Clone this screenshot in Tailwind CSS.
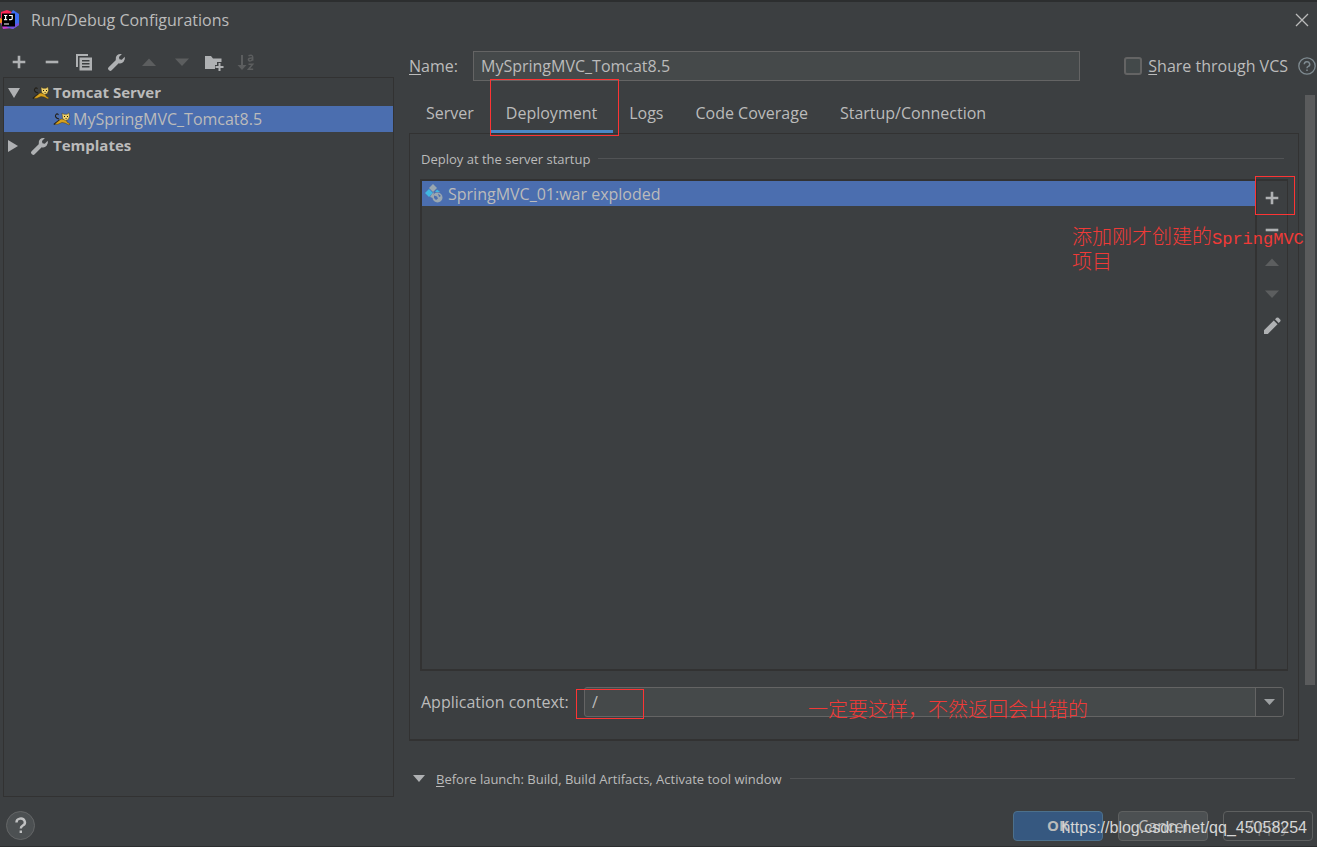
<!DOCTYPE html>
<html lang="en">
<head>
<meta charset="utf-8">
<title>Run/Debug Configurations</title>
<script src="https://cdn.jsdelivr.net/npm/@tailwindcss/browser@4"></script>
</head>
<body class="bg-[#3c3f41] text-[#bbbbbb] font-['Open_Sans','Noto_Sans_CJK_SC',sans-serif] text-base">
<svg class="hidden" aria-hidden="true">
  <symbol id="plus" viewBox="0 0 20 20"><path d="M8.700 3.700h2.600v5h5v2.600h-5v5H8.700v-5h-5V8.700h5z" fill="#afb1b3"/></symbol>
  <symbol id="minus" viewBox="0 0 20 20"><path d="M3.700 8.700h12.600v2.600H3.700z" fill="#afb1b3"/></symbol>
  <symbol id="up" viewBox="0 0 20 20"><path d="M3 14h14l-7-7.500z" fill="#5c5e5f"/></symbol>
  <symbol id="down" viewBox="0 0 20 20"><path d="M3 6.500h14l-7 7.500z" fill="#5c5e5f"/></symbol>
  <symbol id="wrench" viewBox="0 0 20 20"><path d="M17.700 4.800 14.800 7.700 12.400 7.300 12 5 14.900 2.100A5 5 0 0 0 8.700 8.200L1.600 15.200a1.900 1.900 0 0 0 0 2.700l.4.4a1.900 1.900 0 0 0 2.700 0L11.700 11.200A5 5 0 0 0 17.700 4.800z" fill="#afb1b3"/></symbol>
  <symbol id="cat" viewBox="0 0 18 14">
    <path d="M6 7C3 6 1.500 4.500 3 2.500 4 1.300 5.500 2 5 3M6.500 8 2 11.500.8 12.500" fill="none" stroke="#221e16" stroke-width="1.100"/>
    <path d="M3 11 8 7l5 .5 1 2.500 3 2-1 1-4-2-3-.6-4 1.800-3 .2z" fill="#d8a11c" stroke="#3a2b0a" stroke-width=".4"/>
    <path d="M9 1l2 1.300h3L16 .8l.6 3.700-1.400 3.200-3 .8-2.600-2z" fill="#efd16a" stroke="#2b210d" stroke-width=".4"/>
    <path d="M11 4h1v1h-1zM14 4h1v1h-1zM12.500 6.300h1.200v.7h-1.200z" fill="#201a10"/>
  </symbol>
</svg>

<div class="flex min-h-screen flex-col border-t-2 border-[#2c2e2f]">
  <header class="flex h-9 items-center justify-between pr-2">
    <div class="flex items-center gap-3">
      <svg class="h-5 w-[19px]" viewBox="0 0 19 20" aria-hidden="true">
        <path d="M0 8 6 10 5 15 0 13z" fill="#f98b1c"/>
        <path d="M1 2 7 0l5 2 1 5-6 5-6-4z" fill="#fe2857"/>
        <path d="M1 13l6-3 5 8-9 1z" fill="#c53bd1"/>
        <path d="M11 3 13 0l6 4v11l-6 4-6-2z" fill="#3d6df0"/>
        <path d="M12 15l7-2v2l-6 4-4-1z" fill="#7750d8"/>
        <path d="M2 3.500h13v13H2z" fill="#000"/>
        <path d="M4 5.500h3.200M5.600 5.500v4.200M4 9.700h3.200M9 5.500h3.200v3q0 1.200-1.200 1.200H9M4 14h5" fill="none" stroke="#fff" stroke-width="1.200"/>
      </svg>
      <h1>Run/Debug Configurations</h1>
    </div>
    <button type="button" aria-label="Close"><svg class="size-[14px]" viewBox="0 0 14 14"><path d="M1 1 13 13M13 1 1 13" stroke="#bbbbbb" stroke-width="1.300"/></svg></button>
  </header>

  <div class="flex flex-1">
    <aside class="flex w-[394px] shrink-0 flex-col pl-[3px]">
      <div class="ml-[6px] flex h-[39px] w-[248px] items-center justify-between pt-2" role="toolbar">
        <button type="button" aria-label="Add"><svg class="size-5"><use href="#plus"/></svg></button>
        <button type="button" aria-label="Remove"><svg class="size-5"><use href="#minus"/></svg></button>
        <button type="button" aria-label="Copy"><svg class="size-5" viewBox="0 0 20 20"><path d="M2 2h12v2H4v11H2z" fill="#afb1b3"/><path d="M5.500 5.500h12.500V18.500H5.500zM8 8v1.400h7.500V8zM8 11v1.400h7.500V11zM8 14v1.400h7.500V14z" fill="#afb1b3" fill-rule="evenodd"/></svg></button>
        <button type="button" aria-label="Edit templates"><svg class="size-5"><use href="#wrench"/></svg></button>
        <button type="button" aria-label="Move up" disabled><svg class="size-5"><use href="#up"/></svg></button>
        <button type="button" aria-label="Move down" disabled><svg class="size-5"><use href="#down"/></svg></button>
        <button type="button" aria-label="New folder"><svg class="size-5" viewBox="0 0 20 20"><path d="M1 4h6l2 2.500h8.500V10H13v3h-2v4H1z" fill="#afb1b3"/><path d="M14.500 11h2v3h3v2h-3v3h-2v-3h-3v-2h3z" fill="#afb1b3"/></svg></button>
        <button type="button" aria-label="Sort" disabled><svg class="size-5" viewBox="0 0 20 20"><path d="M4 3h2v10h3.500L5 18 .5 13H4z" fill="#5c5e5f"/><path d="M11.500 3.800q4.200-1.500 4.200 1.400v3.600M15.700 6c-6-.4-5 4-1.500 2.600l1.500-1.200M11.500 12.200h4.200l-4.200 5h4.700" fill="none" stroke="#5c5e5f" stroke-width="1.500"/></svg></button>
      </div>
      <ul class="flex-1 border border-[#323232] pt-px" role="tree">
        <li class="flex h-[27px] items-center pl-1 text-[15px] font-bold">
          <svg class="mr-3 h-[10px] w-3" viewBox="0 0 12 10"><path d="M0 0h12L6 10z" fill="#afb1b3"/></svg>
          <svg class="mr-[3px] h-[14px] w-[18px]"><use href="#cat"/></svg>Tomcat Server
        </li>
        <li class="flex h-[26px] items-center bg-[#4b6eaf] pl-[49px]">
          <svg class="mr-[2px] h-[14px] w-[18px]"><use href="#cat"/></svg>MySpringMVC_Tomcat8.5
        </li>
        <li class="flex h-[27px] items-center pl-1 text-[15px] font-bold">
          <svg class="mr-3 h-3 w-[10px]" viewBox="0 0 10 12"><path d="M0 0v12L10 6z" fill="#afb1b3"/></svg>
          <svg class="mr-[3px] size-5"><use href="#wrench"/></svg>Templates
        </li>
      </ul>
    </aside>

    <main class="flex min-w-0 flex-1 flex-col pl-[15px]">
      <div class="flex h-[57px] items-start pt-[13px]">
        <label for="name" class="w-16 leading-[30px]"><span class="underline underline-offset-2">N</span>ame:</label>
        <input id="name" value="MySpringMVC_Tomcat8.5" class="h-[30px] min-w-0 flex-1 border border-[#646464] bg-[#45494a] px-[7px] outline-none">
        <div class="ml-[44px] flex h-[30px] items-center">
          <input id="vcs" type="checkbox" class="mr-[6px] size-[18px] appearance-none rounded-[3px] border-2 border-[#646464] bg-[#43494a]">
          <label for="vcs"><span class="underline underline-offset-2">S</span>hare through VCS</label>
          <button type="button" aria-label="Help on sharing" class="ml-[10px] mr-px"><svg class="size-[18px]" viewBox="0 0 18 18"><circle cx="9" cy="9" r="8.200" fill="none" stroke="#7f8b91" stroke-width="1.300"/><path d="M6.300 7.200a2.700 2.500 0 1 1 4 2.200q-1.300.6-1.300 1.800M9 12.500v1.600" fill="none" stroke="#7f8b91" stroke-width="1.500"/></svg></button>
        </div>
      </div>

      <div class="flex flex-1">
        <div class="flex min-w-0 flex-1 flex-col">
          <div class="flex h-[38px]" role="tablist">
            <button type="button" role="tab" class="pb-[3px] pl-[17px] pr-4">Server</button>
            <button type="button" role="tab" aria-selected="true" class="relative border-b-3 border-[#4a88c7] px-4">Deployment
              <span class="absolute -bottom-[6px] -right-[6px] -top-4 left-0 border border-[#fd3434]"></span>
            </button>
            <button type="button" role="tab" class="px-4 pb-[3px]">Logs</button>
            <button type="button" role="tab" class="px-4 pb-[3px]">Code Coverage</button>
            <button type="button" role="tab" class="px-4 pb-[3px]">Startup/Connection</button>
          </div>

          <section class="flex flex-1 flex-col border border-b-2 border-[#323232] px-[10px]">
            <div class="flex h-[45px] items-center pt-[7px] pr-1">
              <h2 class="pl-px text-[13px]">Deploy at the server startup</h2>
              <span class="mb-1 ml-2 h-px flex-1 bg-[#515355]"></span>
            </div>
            <div class="flex flex-1 border-2 border-r border-[#323232]">
              <ul class="flex-1">
                <li class="flex h-[25px] items-center bg-[#4b6eaf] pl-[3px]">
                  <svg class="mr-[5px] h-5 w-[18px]" viewBox="0 0 18 20"><path d="M8 0l4 4-4 4-4-4z" fill="#9aa7b0"/><path d="M4 5l4 4-4 4-4-4z" fill="#40b6e0"/><path d="M12 5.500l3 2.500h-5z" fill="#40b6e0"/><path d="M7 10l2-2-1 6-3-1z" fill="#9aa7b0"/><circle cx="12.500" cy="13.500" r="5" fill="#9aa7b0"/><path d="M9 11.500l3 1 1 2-2 1.500-2-2zM13 9.500l3 2.500-2 1z" fill="#4b6eaf"/></svg>
                  SpringMVC_01:war exploded
                </li>
              </ul>
              <div class="relative flex w-8 flex-col items-center gap-3 border-l-2 border-[#323232] pt-[7px]" role="toolbar">
                <button type="button" aria-label="Add artifact"><svg class="size-5"><use href="#plus"/></svg></button>
                <button type="button" aria-label="Remove artifact"><svg class="size-5"><use href="#minus"/></svg></button>
                <button type="button" aria-label="Move artifact up" disabled><svg class="size-5"><use href="#up"/></svg></button>
                <button type="button" aria-label="Move artifact down" disabled><svg class="size-5"><use href="#down"/></svg></button>
                <button type="button" aria-label="Edit artifact"><svg class="size-5" viewBox="0 0 20 20"><path d="M2 14.200 11.800 4.500l3.700 3.700L5.800 18H2zM13 3.300l1.500-1.500q1-.8 2 0l1.700 1.700q.8 1 0 2L16.700 7z" fill="#afb1b3"/></svg></button>
                <span class="absolute -left-[2px] -top-[5px] h-[39px] w-10 border border-[#fd3434]"></span>
                <p class="absolute -right-[17px] top-[43px] w-[232px] whitespace-nowrap text-xl leading-[25px] font-light text-[#f03a37]">添加刚才创建的<span class="font-['Liberation_Mono',monospace] text-[17px] leading-none">SpringMVC</span><br>项目</p>
              </div>
            </div>
            <div class="flex h-[68px] items-start pl-px pr-1 pt-4">
              <label for="context" class="w-[163px] leading-[30px]">Application context:</label>
              <div class="relative flex h-[30px] flex-1 rounded-[3px] border border-[#646464] bg-[#45494a]">
                <input id="context" value="/" class="min-w-0 flex-1 px-[7px] outline-none">
                <button type="button" aria-label="Show contexts" class="flex w-7 items-center justify-center rounded-r-[2px] border-l border-[#646464] bg-[#3c3f41]"><svg class="h-[6px] w-[11px]" viewBox="0 0 11 6"><path d="M0 0h11L5.500 6z" fill="#9da0a2"/></svg></button>
                <span class="absolute -left-[9px] top-px h-[30px] w-[68px] border border-[#fd3434]"></span>
                <p class="absolute left-[223px] top-[9px] whitespace-nowrap text-xl leading-[25px] font-light text-[#f03a37]">一定要这样，不然返回会出错的</p>
              </div>
            </div>
          </section>

          <div class="flex h-14 items-center pl-1 pt-[22px] text-[13px]">
            <svg class="mb-1 mr-[11px] h-[7px] w-3" viewBox="0 0 12 7"><path d="M0 0h12L6 7z" fill="#afb1b3"/></svg>
            <span><span class="underline underline-offset-2">B</span>efore launch: Build, Build Artifacts, Activate tool window</span>
            <span class="mb-1 ml-2 mr-1 h-px flex-1 bg-[#515355]"></span>
          </div>
        </div>
        <div class="flex w-[18px] flex-col pl-[6px] pr-[2px]">
          <div class="grow-[590] bg-[#5a5b5c]"></div>
          <div class="grow-[112]"></div>
        </div>
      </div>
    </main>
  </div>

  <footer class="relative flex h-[50px] items-center justify-between border-b border-[#2c2e2f] pl-[6px] pr-1 pt-2">
    <button type="button" aria-label="Help"><svg class="size-[29px]" viewBox="0 0 29 29"><circle cx="14.500" cy="14.500" r="14" fill="#4c5052" stroke="#646667"/><path d="M10.500 11.500a4.200 3.700 0 1 1 6.300 3q-2 1.200-2 3M14.800 19.500v2.500" fill="none" stroke="#c0c1c2" stroke-width="2.400"/></svg></button>
    <div class="flex gap-[15px]">
      <button type="button" class="h-[30px] w-[90px] rounded border border-[#4c708c] bg-[#365880] text-[15px] font-bold">OK</button>
      <button type="button" class="h-[30px] w-[90px] rounded border border-[#5e6060] bg-[#4c5052]">Cancel</button>
      <button type="button" disabled class="h-[30px] w-[90px] rounded border border-[#5e6060] text-[#777777]">Apply</button>
    </div>
    <span class="pointer-events-none absolute right-[10px] top-[19px] font-['Liberation_Sans',sans-serif] text-base text-[#d5d6d6]">https://blog.csdn.net/qq_45058254</span>
  </footer>
</div>
</body>
</html>
